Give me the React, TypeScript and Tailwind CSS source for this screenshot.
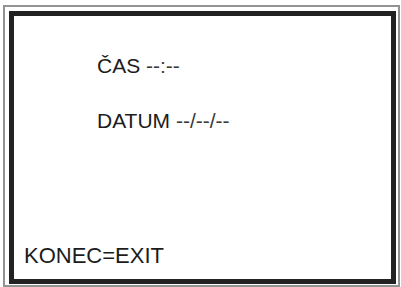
import React from "react";

export default function App() {
  return (
    <div className="w-[401px] h-[287px] bg-white relative overflow-hidden font-['Liberation_Sans',Arial,sans-serif] text-[#1c1c1c]">
      {/* outer thin frame */}
      <div className="absolute left-[3px] top-[5px] w-[397px] h-[282px] border-2 border-[#939393] pt-[4px] pl-[4px] pr-[2px] pb-[1px]">
        {/* thick inner frame */}
        <div className="w-full h-full border-[5px] border-[#222] bg-white flex flex-col">
          <div className="pl-[83px] pt-[39px] text-[21px] leading-none">
            ČAS <span className="text-[#3a3a3a]">--:--</span>
          </div>
          <div className="pl-[83px] pt-[34px] text-[21px] leading-none">
            DATUM <span className="text-[#3a3a3a]">--/--/--</span>
          </div>
          <div className="mt-auto pl-[10px] pb-[12px] text-[22px] leading-none">KONEC=EXIT</div>
        </div>
      </div>
    </div>
  );
}
